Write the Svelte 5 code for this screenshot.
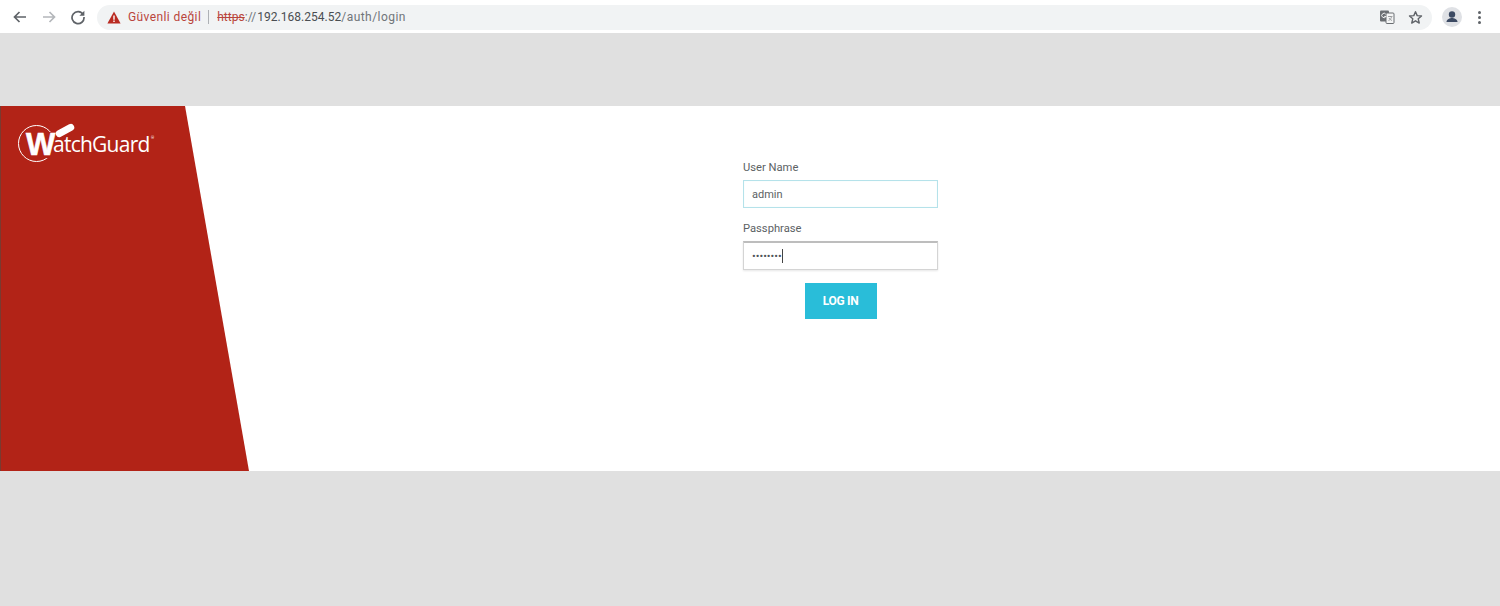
<script>
  let user = $state('admin');
</script>

<div class="page">
  <header class="chrome">
    <div class="nav">
      <svg class="ico" viewBox="0 0 16 16"><path d="M14 8H3M7.5 3 2.5 8l5 5" fill="none" stroke="#5f6368" stroke-width="1.7"/></svg>
      <svg class="ico" viewBox="0 0 16 16"><path d="M2 8h11M8.5 3l5 5-5 5" fill="none" stroke="#b4b7bb" stroke-width="1.7"/></svg>
      <svg class="ico" viewBox="0 0 16 16"><path d="M13.2 5.6A6 6 0 1 0 14 8" fill="none" stroke="#5f6368" stroke-width="1.7"/><path d="M14.4 1.8v5h-5z" fill="#5f6368"/></svg>
    </div>
    <div class="omnibox">
      <svg class="warn" viewBox="0 0 14 13"><path d="M7 0.5 13.6 12.5H.4z" fill="#b92b22"/><path d="M6.3 4.5h1.4v4.2H6.3zM6.3 9.6h1.4v1.4H6.3z" fill="#fff"/></svg>
      <span class="insecure">Güvenli değil</span>
      <span class="sep"></span>
      <span class="url"><s>https</s><span class="dim">://</span><span class="host">192.168.254.52</span><span class="path">/auth/login</span></span>
      <span class="grow"></span>
      <svg class="translate" viewBox="0 0 16 16">
        <rect x="1" y="1.500" width="9" height="11" rx="1" fill="#6a6e72"/>
        <rect x="7" y="4" width="8" height="10.500" rx="1" fill="#f4f5f5" stroke="#6a6e72"/>
        <path d="M6.800 5.200A2.200 2.200 0 1 0 7 7.400H5.200" fill="none" stroke="#fff" stroke-width=".9"/>
        <path d="M9 7.500h4.500M11.200 7v1M12.500 8c-.5 2-1.800 3-3 3.500M10 9c.6 1.200 1.700 2 3 2.500" fill="none" stroke="#8a8d91" stroke-width=".8"/>
      </svg>
      <svg class="star" viewBox="0 0 16 16"><path d="M8 1.800 9.800 6l4.600.4-3.500 3 1.100 4.500L8 11.500l-4 2.400 1.100-4.500-3.500-3L6.200 6z" fill="none" stroke="#5f6368" stroke-width="1.500" stroke-linejoin="round"/></svg>
    </div>
    <div class="avatar">
      <svg viewBox="0 0 20 20"><circle cx="10" cy="10" r="10" fill="#dfe1e5"/><circle cx="10" cy="7.500" r="3.200" fill="#3c4a63"/><path d="M4.500 15c0-2.800 3.500-4 5.500-4s5.500 1.200 5.500 4z" fill="#3c4a63"/></svg>
    </div>
    <div class="menu"><i></i><i></i><i></i></div>
  </header>

  <main class="card">
    <div class="brand" aria-label="WatchGuard">
      <div class="logo">
        <span class="ring"></span>
        <b class="w">W</b>
        <span class="swoosh"></span>
        <span class="word">atchGuard</span><sup>®</sup>
      </div>
    </div>

    <form class="form" onsubmit={(e) => e.preventDefault()}>
      <label for="u">User Name</label>
      <input id="u" class="active" bind:value={user} />
      <label for="p" class="second">Passphrase</label>
      <div class="pass">
        <span class="dots">••••••••</span><span class="caret"></span>
      </div>
      <button type="submit">LOG IN</button>
    </form>
  </main>
</div>

<style>
  :global(body) {
    margin: 0;
    background: #e0e0e0;
    font-family: Roboto, "Liberation Sans", sans-serif;
  }
  .page {
    height: 606px;
    overflow: hidden;
    background: #e0e0e0;
  }
  .chrome {
    height: 33px;
    box-sizing: border-box;
    padding: 1px 0 0 12px;
    background: #fff;
    display: flex;
    align-items: center;
  }
  .nav {
    display: flex;
    gap: 13px;
    width: 85px;
    flex: none;
  }
  .ico {
    width: 16px;
    height: 16px;
  }
  .omnibox {
    width: 1335px;
    height: 25px;
    flex: none;
    box-sizing: border-box;
    border-radius: 13px;
    background: #f1f3f4;
    display: flex;
    align-items: center;
    padding: 0 9px 0 10px;
  }
  .warn {
    width: 14px;
    height: 13px;
    margin-right: 7px;
  }
  .insecure {
    color: #b9453c;
    font-size: 12px;
    font-family: Roboto, sans-serif;
    letter-spacing: 0.4px;
  }
  .sep {
    width: 1px;
    height: 14px;
    background: #aeb1b5;
    margin: 0 8px 0 7px;
  }
  .url {
    font-family: Roboto, sans-serif;
    font-size: 12px;
    letter-spacing: 0.02px;
    white-space: nowrap;
  }
  s {
    color: #b9453c;
  }
  .dim {
    color: #70757a;
  }
  .host {
    color: #4a4e52;
    margin-left: 1px;
  }
  .path {
    color: #70757a;
    letter-spacing: 0.45px;
  }
  .grow {
    flex: 1;
  }
  .translate {
    width: 16px;
    height: 16px;
    margin-right: 13px;
  }
  .star {
    width: 15px;
    height: 15px;
  }
  .avatar {
    margin-left: 10px;
    width: 20px;
    height: 20px;
    flex: none;
  }
  .avatar svg {
    display: block;
    width: 20px;
    height: 20px;
  }
  .menu {
    margin-left: 16px;
    display: flex;
    flex-direction: column;
    gap: 2px;
  }
  .menu i {
    display: block;
    width: 3px;
    height: 3px;
    border-radius: 50%;
    background: #5f6368;
  }
  .card {
    margin-top: 73px;
    height: 365px;
    background: #fff;
    position: relative;
    display: flex;
    justify-content: center;
  }
  .brand {
    position: absolute;
    left: 0;
    top: 0;
    width: 249px;
    height: 365px;
    background: #b22317;
    border-left: 1px solid #7a3a30;
    box-sizing: border-box;
    clip-path: polygon(0 0, 185px 0, 249px 100%, 0 100%);
  }
  .logo {
    position: relative;
    color: #fff;
    height: 60px;
  }
  .ring {
    position: absolute;
    left: 17px;
    top: 19px;
    width: 37px;
    height: 37px;
    box-sizing: border-box;
    border: 1.500px solid #fff;
    border-radius: 50%;
  }
  .w {
    position: absolute;
    left: 25px;
    top: 26px;
    font-family: "Liberation Sans", sans-serif;
    font-weight: 700;
    font-size: 31px;
    line-height: 26px;
    background: #b22317;
    -webkit-text-stroke: 0.6px #fff;
  }
  .swoosh {
    position: absolute;
    left: 54px;
    top: 21px;
    width: 20px;
    height: 7px;
    border-radius: 4px;
    background: #fff;
    transform: rotate(-28deg);
  }
  .word {
    position: absolute;
    left: 52px;
    top: 25px;
    font-family: "Open Sans", "Liberation Sans", sans-serif;
    font-size: 21px;
    line-height: 26px;
    letter-spacing: -0.75px;
  }
  sup {
    position: absolute;
    left: 150px;
    top: 30px;
    font-size: 4px;
    line-height: 4px;
  }
  .form {
    width: 195px;
    margin-left: 181px;
    padding-top: 55px;
    display: flex;
    flex-direction: column;
  }
  label {
    font-size: 11.200px;
    line-height: 14px;
    height: 19px;
    color: #5c6264;
  }
  .second {
    margin-top: 14px;
    height: 19px;
  }
  input,
  .pass {
    width: 195px;
    box-sizing: border-box;
    font: 11px Roboto, sans-serif;
    color: #5c6264;
    padding: 0 8px;
    background: #fff;
    outline: none;
  }
  input {
    height: 28px;
    border: 1px solid #b5e2ea;
    box-shadow: inset 0 0 1px #d8f0f4;
  }
  .pass {
    height: 29px;
    border: 1px solid #d4d4d4;
    border-top: 2px solid #bdbdbd;
    box-shadow: 0 1px 2px rgba(0, 0, 0, 0.1);
    display: flex;
    align-items: center;
  }
  .dots {
    font-size: 11px;
    color: #50565a;
  }
  .caret {
    width: 1px;
    height: 14px;
    background: #444;
  }
  button {
    align-self: center;
    margin-top: 13px;
    width: 72px;
    height: 36px;
    border: 0;
    padding: 0;
    background: #29bdd9;
    color: #fff;
    font: 700 12px Roboto, sans-serif;
    letter-spacing: -0.3px;
  }
</style>
